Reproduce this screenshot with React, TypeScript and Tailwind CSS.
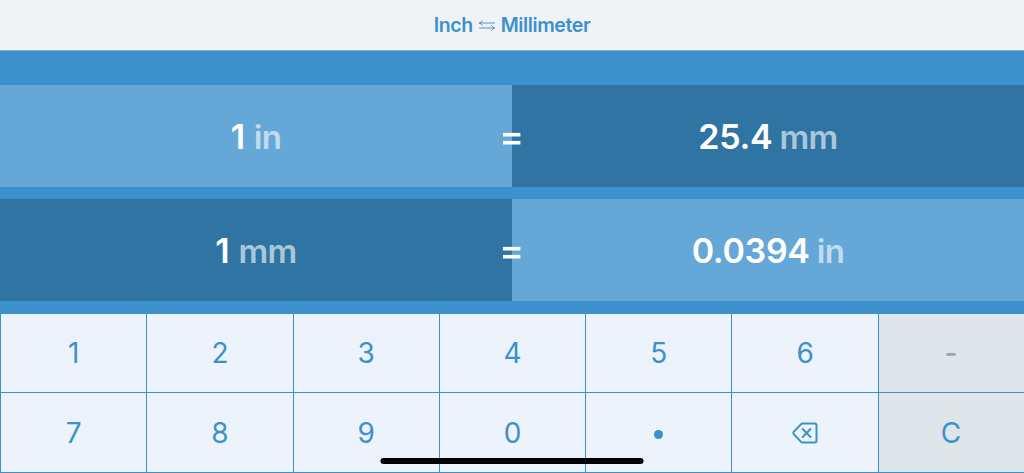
import React from 'react';

const Conversion = ({ value, unit, className }: { value: string; unit: string; className: string }) => {
  return (
    <div className={`flex w-1/2 items-baseline justify-center pt-[31px] text-[34px] leading-[42px] font-semibold text-white ${className}`}>
      <span className="tracking-[-0.3px]">{value}</span>
      <span className="text-[33px] tracking-[-0.6px] text-white/60">{unit}</span>
    </div>
  );
};

const Equals = () => {
  return (
    <svg className="absolute top-[47px] left-[503px] h-[14px] w-[18px]" viewBox="0 0 18 14" fill="white" aria-label="equals">
      <rect x="0" y="0.9" width="17.4" height="3.6" />
      <rect x="0" y="8.9" width="17.4" height="3.6" />
    </svg>
  );
};

const Key = ({ children }: { children: React.ReactNode }) => {
  return (
    <button type="button" className="flex items-center justify-center bg-[#ecf3fa]">
      {children}
    </button>
  );
};

const App = () => {
  return (
    <div className="relative flex h-[473px] w-full flex-col overflow-hidden bg-[#3c91cc] font-['Inter',sans-serif]">

      {/* Header */}
      <header className="flex h-[51px] shrink-0 items-center justify-center gap-[5px] border-b border-[#80add0] bg-[#eff3f6] pt-[2px] text-[19.5px] font-semibold tracking-[-0.4px] text-[#3c91cc]">
        <span>Inch</span>
        <svg className="h-[12px] w-[18px]" viewBox="0 0 18 12" fill="none" stroke="currentColor" strokeWidth="0.9">
          <path d="M17 3H1.200M4.500 .3Q3.200 2.500 1.200 3Q3.200 3.500 4.500 5.500M1 8h15.700M13.500 5.500q1.200 2 3.200 2.500q-2 .5-3.200 2.700" />
        </svg>
        <span>Millimeter</span>
      </header>

      {/* Conversions */}
      <div className="flex shrink-0 flex-col gap-[12px] pt-[34px] pb-[13px]">
        <div className="relative flex h-[102px]">
          <Conversion value="1" unit="in" className="gap-[9px] bg-[#65a7d6]" />
          <Conversion value="25.4" unit="mm" className="gap-[7px] bg-[#3074a3]" />
          <Equals />
        </div>
        <div className="relative flex h-[102px]">
          <Conversion value="1" unit="mm" className="gap-[9px] bg-[#3074a3]" />
          <Conversion value="0.0394" unit="in" className="gap-[7px] bg-[#65a7d6]" />
          <Equals />
        </div>
      </div>

      {/* Keypad */}
      <div className="grid h-[159px] shrink-0 grid-cols-7 grid-rows-[78px_79px] gap-px pb-px pl-px text-[28px] text-[#3c91cc]">
        <Key>1</Key>
        <Key>2</Key>
        <Key>3</Key>
        <Key>4</Key>
        <Key>5</Key>
        <Key>6</Key>
        <button type="button" className="flex items-center justify-center bg-[#dee5eb] pr-px font-medium text-[#9ba4ae]">-</button>
        <Key>7</Key>
        <Key>8</Key>
        <Key>9</Key>
        <Key>0</Key>
        <Key>
          <span className="mt-[4px] size-[9px] rounded-full bg-[#3c91cc]" />
        </Key>
        <Key>
          <svg className="h-[22px] w-[26px]" viewBox="0 0 26 22" fill="none" stroke="currentColor" strokeWidth="2" strokeLinejoin="round" strokeLinecap="round">
            <path d="M10.500 1.500H22.500Q24.500 1.500 24.500 3.500V18.500Q24.500 20.500 22.500 20.500H10.500Q9.700 20.500 9.100 19.900L1.800 12.200Q.8 11 1.800 9.800L9.100 2.100Q9.700 1.500 10.500 1.500Z" />
            <path d="M10.700 7l7.800 8M18.500 7l-7.800 8" />
          </svg>
        </Key>
        <button type="button" className="flex items-center justify-center bg-[#dee5eb] pr-px">C</button>
      </div>

      {/* Home indicator */}
      <div className="absolute bottom-[9px] left-1/2 h-[6px] w-[263px] -translate-x-1/2 rounded-full bg-black" />
    </div>
  );
};

export default App;
